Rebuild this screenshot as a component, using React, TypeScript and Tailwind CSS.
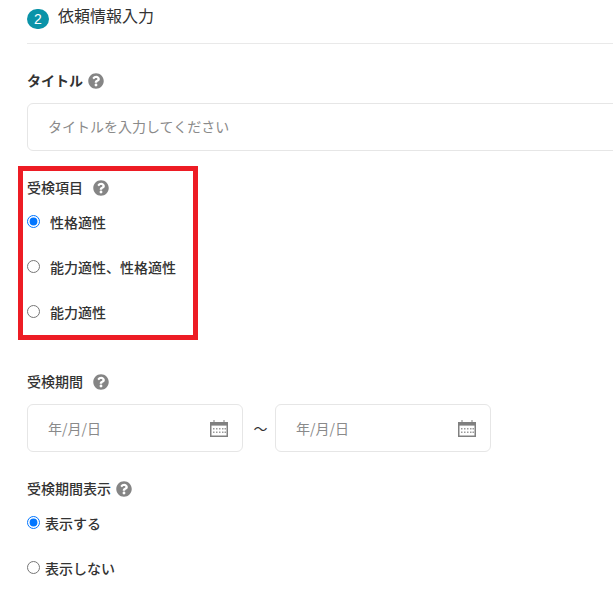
import React from "react";
import { FaQuestionCircle } from "react-icons/fa";

const FONT = "font-['Noto_Sans_CJK_JP','Noto_Sans_CJK_SC',sans-serif]";

function HelpIcon({ className = "" }: { className?: string }) {
  return <FaQuestionCircle className={`w-4 h-4 text-[#858585] shrink-0 ${className}`} />;
}

function CalendarIcon() {
  // small grey calendar used by the date fields
  return (
    <svg width="18" height="17" viewBox="0 0 18 17" className="shrink-0">
      <rect x="0.75" y="2.75" width="16.5" height="13.5" fill="#fff" stroke="#808080" strokeWidth="1.5" />
      <rect x="0" y="2" width="18" height="3.6" fill="#808080" />
      <rect x="3.5" y="0" width="1" height="3" fill="#808080" />
      <rect x="13.5" y="0" width="1" height="3" fill="#808080" />
      {[3, 6, 9, 12, 14.5].map((x) => (
        <rect key={`a${x}`} x={x} y="8" width="1.5" height="1.5" fill="#9a9a9a" />
      ))}
      {[3, 6, 9, 12, 14.5].map((x) => (
        <rect key={`b${x}`} x={x} y="11.5" width="1.5" height="1.5" fill="#9a9a9a" />
      ))}
    </svg>
  );
}

function DateField() {
  return (
    <div className="w-[216px] h-12 flex items-center justify-between pl-5 pr-[14px] bg-white border border-[#e6e6e6] rounded-md">
      <span className="text-sm text-[#8a8a8a]">年/月/日</span>
      <CalendarIcon />
    </div>
  );
}

function RadioRow({ name, label, checked, labelClass }: { name: string; label: string; checked?: boolean; labelClass: string }) {
  return (
    <label className="h-[45px] flex items-center">
      <input type="radio" name={name} defaultChecked={checked} className="w-[13px] h-[13px] m-0 shrink-0" />
      <span className={`text-[14px] font-medium text-[#333] leading-5 ${labelClass}`}>{label}</span>
    </label>
  );
}

export default function App() {
  return (
    <div className={`relative w-[613px] h-[596px] overflow-hidden bg-white pl-[27px] ${FONT}`}>
      {/* Step header */}
      <div className="h-[44px] border-b border-[#e9e9e9] w-[586px] flex items-start pt-[3px]">
        <span className="w-[22px] h-5 mt-[6px] rounded-full bg-[#0a93a8] text-white text-[14px] leading-5 text-center font-['Liberation_Sans',sans-serif]">2</span>
        <span className="ml-[9px] text-base leading-6 text-[#333]">依頼情報入力</span>
      </div>

      {/* Title */}
      <div className="mt-[27px] h-5 flex items-center gap-[5px]">
        <span className="text-sm font-bold text-[#333] -mt-[2px]">タイトル</span>
        <HelpIcon />
      </div>
      <div className="mt-[12px] w-[620px] h-12 flex items-center pl-5 border border-[#e6e6e6] rounded-md">
        <span className="text-sm text-[#8a8a8a] -mt-[2px]">タイトルを入力してください</span>
      </div>

      {/* Exam items */}
      <div className="mt-[27px] h-5 flex items-center gap-[10px]">
        <span className="text-[14px] font-medium text-[#333] -mt-[2px]">受検項目</span>
        <HelpIcon />
      </div>
      <div className="mt-[1px] flex flex-col">
        <RadioRow name="item" label="性格適性" checked labelClass="ml-[10px]" />
        <RadioRow name="item" label="能力適性、性格適性" labelClass="ml-[10px]" />
        <RadioRow name="item" label="能力適性" labelClass="ml-[10px]" />
      </div>

      {/* Exam period */}
      <div className="mt-[38px] h-5 flex items-center gap-[10px]">
        <span className="text-[14px] font-medium text-[#333] -mt-[2px]">受検期間</span>
        <HelpIcon />
      </div>
      <div className="mt-[12px] flex items-center">
        <DateField />
        <span className="w-8 pl-[3px] text-center text-sm text-[#333]">〜</span>
        <DateField />
      </div>

      {/* Period display */}
      <div className="mt-[27px] h-5 flex items-center gap-[5px]">
        <span className="text-[14px] font-medium text-[#333] -mt-[2px]">受検期間表示</span>
        <HelpIcon />
      </div>
      <div className="mt-[1px] flex flex-col">
        <RadioRow name="show" label="表示する" checked labelClass="ml-[5px]" />
        <RadioRow name="show" label="表示しない" labelClass="ml-[5px]" />
      </div>

      {/* Red annotation box */}
      <div className="absolute left-[18px] top-[166px] w-[180px] h-[174px] border-[5px] border-[#ed1c24] pointer-events-none" />
    </div>
  );
}
